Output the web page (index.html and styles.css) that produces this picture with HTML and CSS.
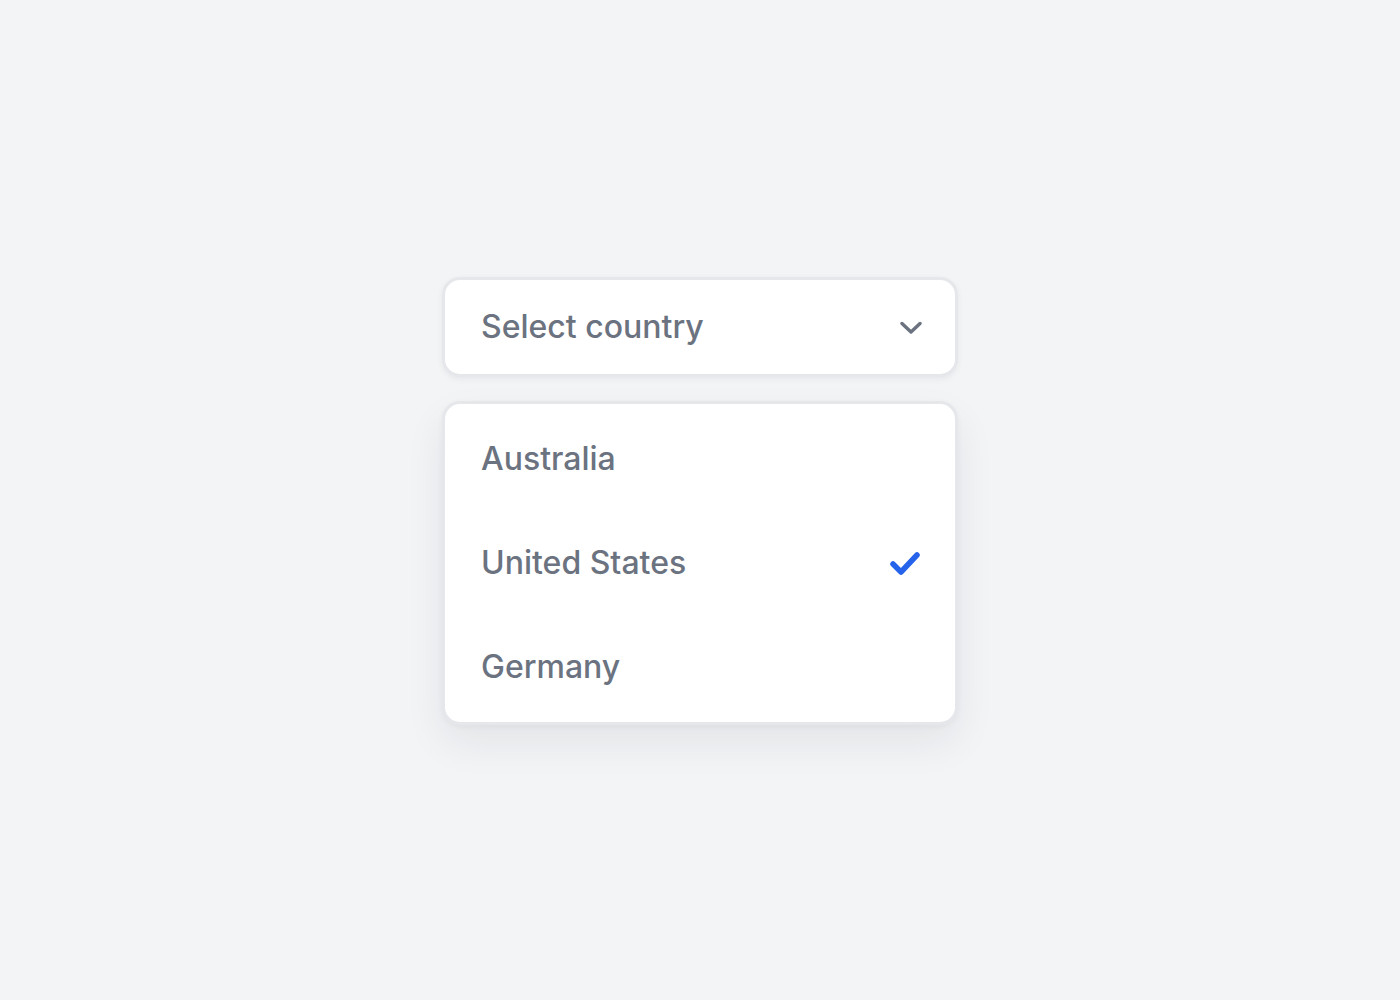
FILE: index.html
```html
<!DOCTYPE html>
<html lang="en">
<head>
<meta charset="utf-8">
<title>Select country</title>
<link rel="stylesheet" href="styles.css">
</head>
<body>
<main class="stage">
  <div class="picker">
    <button class="select" type="button">
      <span class="select-label">Select country</span>
      <svg class="chevron" width="22" height="15" viewBox="0 0 22 15" aria-hidden="true">
        <polyline points="2,3.5 11,12 20,3.5" fill="none" stroke="#6b7280" stroke-width="3.4" stroke-linecap="round" stroke-linejoin="round"/>
      </svg>
    </button>
    <ul class="menu">
      <li class="option">Australia</li>
      <li class="option selected">United States
        <svg class="check" width="30" height="28" viewBox="0 0 30 28" aria-hidden="true">
          <polyline points="3,15 11,23 27,6" fill="none" stroke="#2563eb" stroke-width="5.5" stroke-linecap="round" stroke-linejoin="round"/>
        </svg>
      </li>
      <li class="option">Germany</li>
    </ul>
  </div>
</main>
</body>
</html>
```

FILE: styles.css
```css
* { box-sizing: border-box; }
html, body { margin: 0; padding: 0; }
body {
  background: #f3f4f6;
  font-family: Inter, "Noto Sans", "Liberation Sans", sans-serif;
  color: #6b7280;
}
.stage {
  min-height: 1000px;
  display: flex;
  align-items: center;
  justify-content: center;
}
.picker {
  width: 516px;
  display: flex;
  flex-direction: column;
  gap: 24px;
  margin-top: 2px;
}
.select {
  height: 100px;
  width: 100%;
  display: flex;
  align-items: center;
  justify-content: space-between;
  padding: 0 33px 0 36px;
  background: #fff;
  border: 3px solid #e5e7eb;
  border-radius: 18px;
  box-shadow: 0 2px 6px rgba(17, 24, 39, 0.06);
  font: inherit;
  color: inherit;
  cursor: pointer;
}
.select-label {
  font-size: 32px;
  font-weight: 460;
  line-height: 1;
}
.chevron { display: block; }
.menu {
  list-style: none;
  margin: 0;
  padding: 3px 0;
  background: #fff;
  border: 3px solid #e5e7eb;
  border-radius: 18px;
  box-shadow: 0 18px 40px rgba(17, 24, 39, 0.07), 0 2px 6px rgba(17, 24, 39, 0.04);
}
.option {
  height: 104px;
  display: flex;
  align-items: center;
  justify-content: space-between;
  padding: 0 35px 0 36px;
  font-size: 32px;
  font-weight: 460;
  line-height: 1;
}
.check { display: block; }
```
